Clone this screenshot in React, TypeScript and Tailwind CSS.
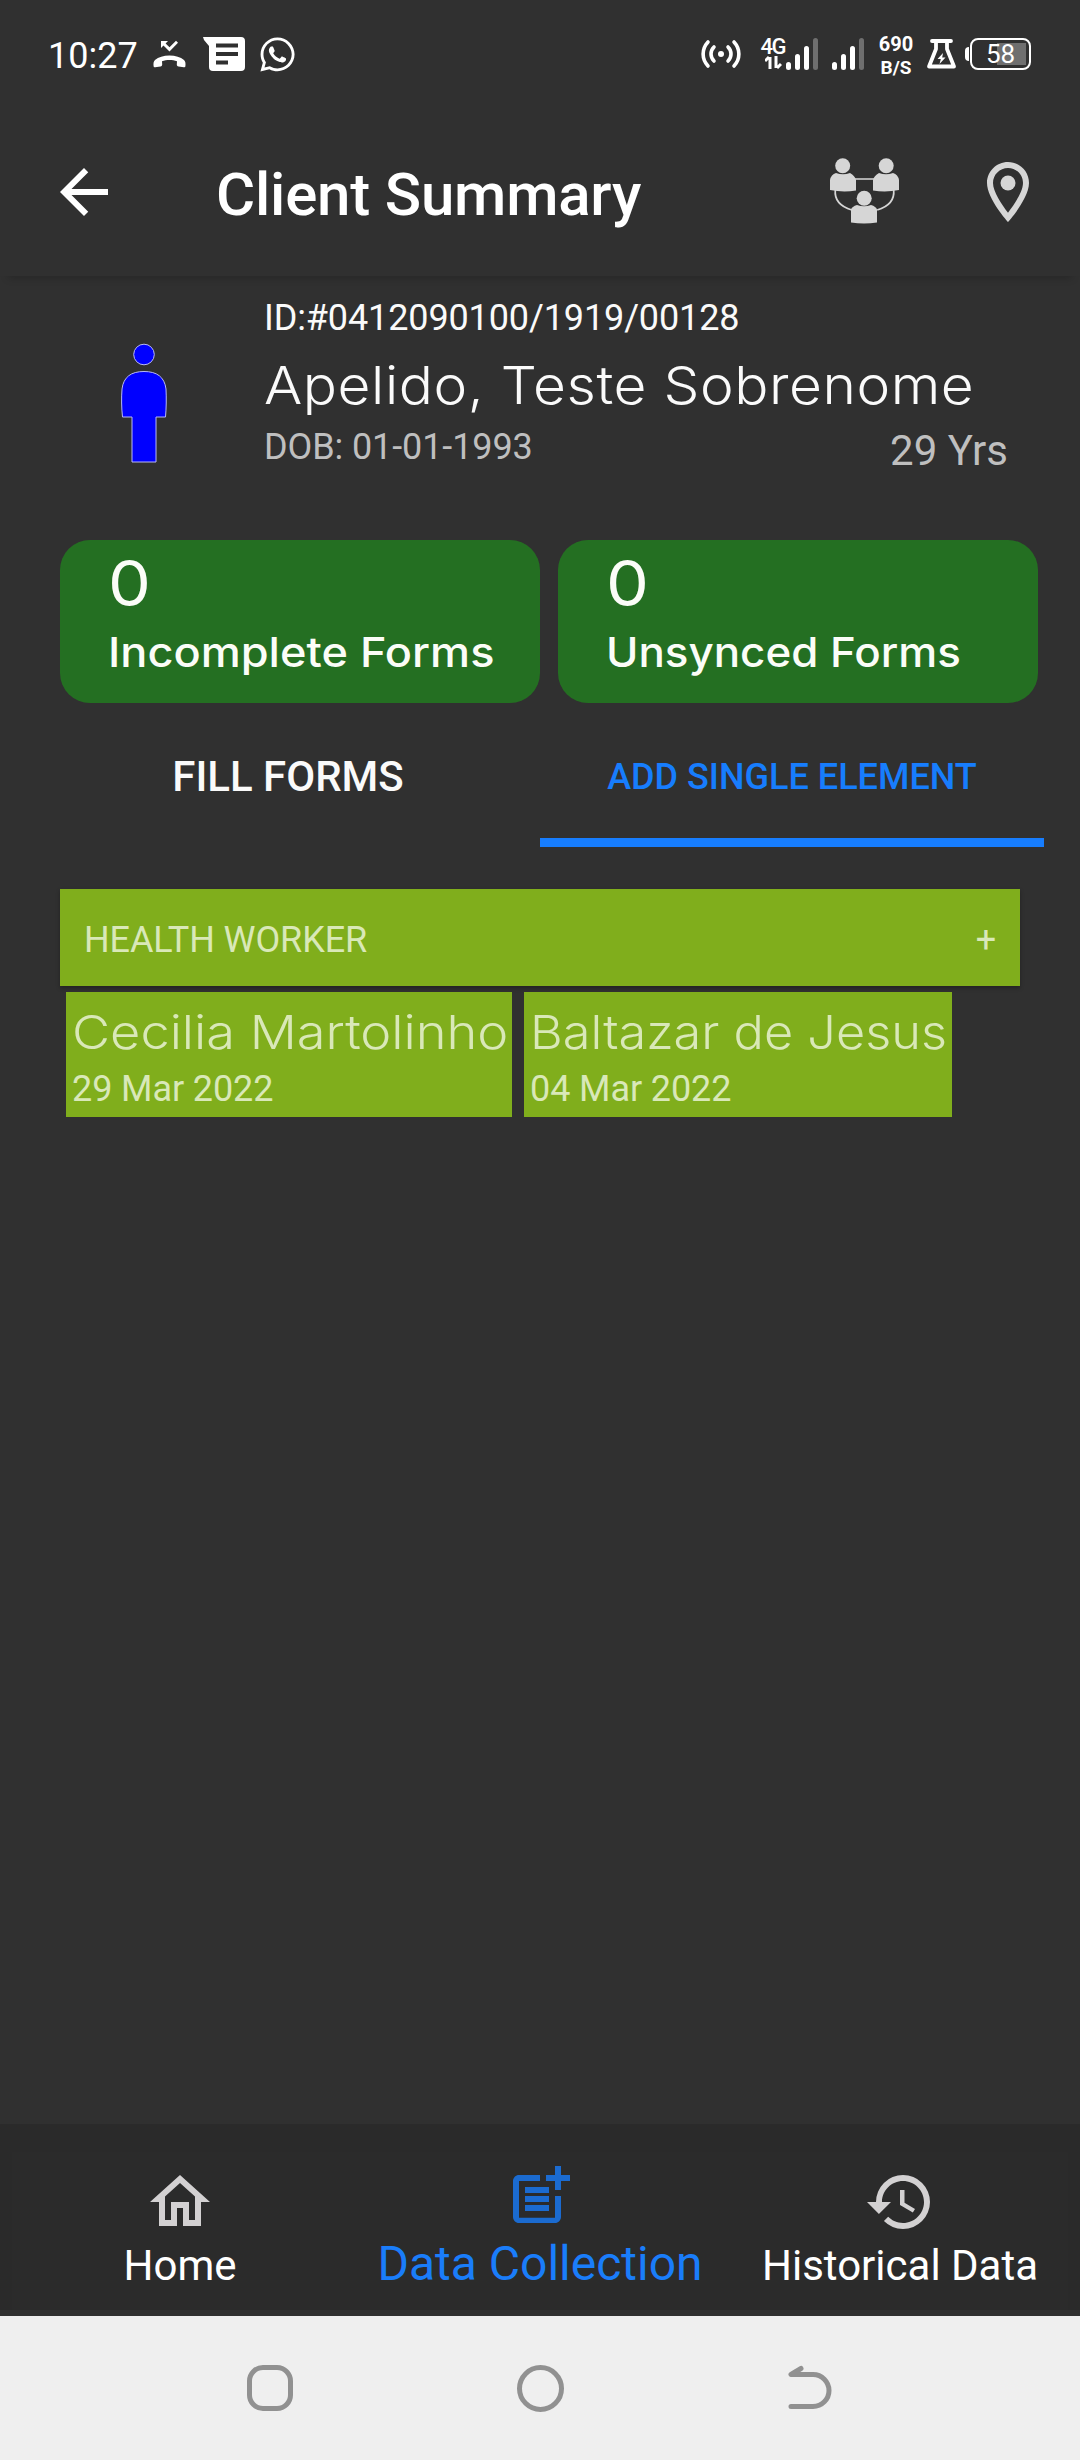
import { ReactNode } from "react";
import { MdArrowBack, MdHistory, MdOutlineHome, MdPostAdd } from "react-icons/md";
import { FaWhatsapp } from "react-icons/fa";

const healthWorkers = [
  { name: "Cecilia Martolinho", date: "29 Mar 2022", width: "w-[446px]", stretch: "scale-x-[1.113]" },
  { name: "Baltazar de Jesus", date: "04 Mar 2022", width: "w-[428px]", stretch: "scale-x-[1.073]" },
];

function SignalBars() {
  return (
    <div className="flex h-8 items-end gap-1">
      <div className="h-2 w-[5px] rounded-sm bg-white" />
      <div className="h-4 w-[5px] rounded-sm bg-white" />
      <div className="h-6 w-[5px] rounded-sm bg-white" />
      <div className="h-8 w-[5px] rounded-sm bg-[#6f6f6f]" />
    </div>
  );
}

function MissedCallIcon() {
  return (
    <svg width="33" height="28" viewBox="0 0 33 28" fill="white">
      <path d="M8 1h7l-2.4 2.4L16.5 7.3 23 .8l2 2-8.5 8.7-6-6L8 8z" />
      <path d="M16.5 15.5c6 0 11 1.500 14.500 4.500 1.500 1.400 1.700 3.500 1.400 6.200-.1.800-.8 1.200-1.600 1.100l-5.300-.8c-1.200-.2-1.700-1-1.700-2l.2-3.200c-4.500-1.700-10.500-1.700-15 0l.2 3.200c0 1-.5 1.800-1.700 2l-5.300.8c-.8.1-1.500-.3-1.600-1.100C.3 23.500.5 21.400 2 20c3.500-3 8.500-4.500 14.500-4.500z" />
    </svg>
  );
}

function MessageIcon() {
  return (
    <svg width="42" height="34" viewBox="0 0 42 34">
      <path
        d="M0 0h38a4 4 0 0 1 4 4v26a4 4 0 0 1-4 4H10a4 4 0 0 1-4-4V9L1 3z"
        fill="white"
      />
      <path d="M13 8.5h22M13 17h22M13 25.5h12" stroke="#303030" strokeWidth="4" />
    </svg>
  );
}

function HotspotIcon() {
  return (
    <svg
      width="42"
      height="30"
      viewBox="0 0 42 30"
      fill="none"
      stroke="white"
      strokeWidth="3.6"
      strokeLinecap="round"
    >
      <path d="M8 3C1.500 10 1.500 20 8 27M34 3c6.500 7 6.500 17 0 24M14 8c-4 4-4 10 0 14M28 8c4 4 4 10 0 14" />
      <circle cx="21" cy="15" r="3" fill="white" stroke="none" />
    </svg>
  );
}

function FlaskIcon() {
  return (
    <svg width="31" height="31" viewBox="0 0 31 31" fill="none">
      <path
        d="M6 2h19M10 3v7L3 27.500h25L21 10V3"
        stroke="white"
        strokeWidth="3.8"
        strokeLinecap="round"
        strokeLinejoin="round"
      />
      <path d="M17 14l-5.500 6h3.300L13.500 25l6-6.500h-3.300z" fill="white" />
    </svg>
  );
}

function GroupIcon() {
  return (
    <svg width="70" height="68" viewBox="830 158 70 68" fill="#d6d6d6">
      <circle cx="842.7" cy="165.7" r="7.5" />
      <circle cx="886.2" cy="165.7" r="7.5" />
      <circle cx="864.2" cy="198.3" r="7.5" />
      <path d="M830 190v-10q1-5.500 6-7 7 2.600 14 0 5 3 6 7v10.500q-13 2-26-.5z" />
      <path d="M899 190v-10q-1-5.500-6-7-7 2.600-14 0-5 3-6 7v10.500q13 2 26-.5z" />
      <path d="M851 222.500v-13q1-3 6-4.500 7 2.600 14 0 5 1.500 6 4.500v13q-13 2-26 0z" />
      <path
        d="M855 179h19M835.300 190c-1 10 5 16.500 16.500 20M893.700 190c1 10-5 16.500-16.500 20"
        fill="none"
        stroke="#d6d6d6"
        strokeWidth="1.7"
      />
    </svg>
  );
}

function PlaceIcon() {
  return (
    <svg width="72" height="72" viewBox="0 0 24 24" fill="#d6d6d6" className="ml-[72px]">
      <path d="M12 2C8.130 2 5 5.130 5 9c0 5.250 7 13 7 13s7-7.750 7-13c0-3.870-3.130-7-7-7zM7 9c0-2.760 2.240-5 5-5s5 2.240 5 5c0 2.880-2.880 7.190-5 9.880C9.920 16.210 7 11.850 7 9z" />
      <circle cx="12" cy="9" r="2.5" />
    </svg>
  );
}

function PersonIcon() {
  return (
    <svg
      width="46"
      height="122"
      viewBox="0 0 46 122"
      fill="#0000ff"
      stroke="#b9b9f5"
      strokeWidth="1"
    >
      <circle cx="23" cy="11.5" r="10.3" />
      <path d="M23 28.500C36 28.500 43.500 34 45 46c.5 9 .3 19-.5 28H35v45H11V74H1.500C.5 65 .3 55 1 46 2.500 34 10 28.500 23 28.500z" />
    </svg>
  );
}

function StatusBar() {
  return (
    <div className="flex h-[108px] items-center justify-between pl-12 pr-[49px] text-white">
      <div className="flex items-center">
        <span className="w-[105px] pt-1 text-[36px] leading-[42px]">10:27</span>
        <MissedCallIcon />
        <div className="ml-[17px]">
          <MessageIcon />
        </div>
        <FaWhatsapp size={39} className="ml-[13px]" />
      </div>
      <div className="flex items-center">
        <HotspotIcon />
        <div className="ml-[19px] flex flex-col">
          <span className="h-[17px] text-[22px] font-medium leading-[17px] tracking-[-1.5px]">
            4G
          </span>
          <svg width="17" height="15" viewBox="0 0 17 15" className="ml-1">
            <path d="M0 6l4-4M5 2v12M11 1v12M16 9l-4 4" stroke="white" strokeWidth="3" fill="none" />
          </svg>
        </div>
        <div className="ml-px flex gap-[14px]">
          <SignalBars />
          <SignalBars />
        </div>
        <div className="ml-[13px] w-[38px] pt-[3px] text-center text-[20px] font-bold leading-[23px]">
          <div>690</div>
          <div className="text-[19px]">B/S</div>
        </div>
        <div className="ml-[11px]">
          <FlaskIcon />
        </div>
        <div className="ml-2 h-3.5 w-1 rounded-l bg-white" />
        <div className="ml-px flex h-8 w-[61px] items-center justify-center rounded-lg border-2 border-white bg-[linear-gradient(#6f6f6f,#6f6f6f)] bg-[length:29px_22px] bg-[position:25px_3px] bg-no-repeat text-[26px] leading-none">
          58
        </div>
      </div>
    </div>
  );
}

function AppBar() {
  return (
    <header className="flex h-[168px] items-center pl-12 pr-9 shadow-[0_10px_8px_-8px_rgba(0,0,0,0.2)]">
      <MdArrowBack size={72} color="white" />
      <h1 className="ml-24 flex-1 pt-[5px] text-[60px] font-medium leading-[70px] tracking-[-0.2px] text-white">
        Client Summary
      </h1>
      <GroupIcon />
      <PlaceIcon />
    </header>
  );
}

function FormsCard({ label, stretch }: { label: string; stretch: string }) {
  return (
    <div className="h-[163px] w-[480px] shrink-0 rounded-[30px] bg-[#246f22] pl-12 pt-2 font-['Inter'] text-[#fbfdf8]">
      <div className="origin-left scale-x-[1.08] text-[63px] leading-[70px]">0</div>
      <div
        className={`origin-left whitespace-nowrap text-[41px] font-medium leading-[68px] ${stretch}`}
      >
        {label}
      </div>
    </div>
  );
}

function NavItem({ icon, label, active }: { icon: ReactNode; label: string; active?: boolean }) {
  return (
    <div
      className={
        active
          ? "flex w-[360px] flex-col items-center pt-2 text-[48px] leading-[56px] text-[#1a7dfa]"
          : "flex w-[360px] flex-col items-center pt-3.5 text-[42px] leading-[56px] text-white"
      }
    >
      {icon}
      <span className={active ? "mt-1" : ""}>{label}</span>
    </div>
  );
}

export default function App() {
  return (
    <div className="flex h-[2460px] w-[1080px] flex-col overflow-hidden bg-[#303030] font-['Roboto',sans-serif]">
      <StatusBar />
      <AppBar />

      {/* Client details */}
      <section className="flex h-[264px] pl-[121px] pr-[72px] pt-[21px]">
        <div className="w-[143px] pt-[46px]">
          <PersonIcon />
        </div>
        <div className="flex-1 whitespace-nowrap">
          <div className="text-[36px] leading-[42px] tracking-[-0.12px] text-[#fafafa]">
            ID:#0412090100/1919/00128
          </div>
          <div className="mt-[14px] origin-left scale-x-[1.093] font-['Inter'] text-[52px] font-light leading-[66px] tracking-[0.5px] text-[#fafafa]">
            Apelido, Teste Sobrenome
          </div>
          <div className="mt-[7px] flex justify-between text-[#bfbfbf]">
            <span className="text-[36px] leading-[42px] tracking-[-0.1px]">DOB: 01-01-1993</span>
            <span className="pt-[3px] text-[42px] leading-[43px]">29 Yrs</span>
          </div>
        </div>
      </section>

      <section className="flex gap-[18px] pl-[60px]">
        <FormsCard label="Incomplete Forms" stretch="scale-x-[1.1]" />
        <FormsCard label="Unsynced Forms" stretch="scale-x-[1.07]" />
      </section>

      {/* Tabs */}
      <div className="flex h-[144px] px-9 font-medium">
        <div className="w-[504px] pt-[49px] text-center text-[42px] leading-[49px] text-[#fafafa]">
          FILL FORMS
        </div>
        <div className="w-[504px] border-b-[9px] border-[#177dfd] pt-[50px] text-center text-[36px] leading-[49px] text-[#177dfd]">
          ADD SINGLE ELEMENT
        </div>
      </div>

      {/* Single elements */}
      <section className="mt-[42px] flex-1 text-[36px] tracking-[-0.1px] text-[#d9e8b8]">
        <div className="ml-[60px] flex h-[97px] w-[960px] items-center justify-between bg-[#80ae1c] px-6 pt-1 shadow-[0_2px_4px_rgba(0,0,0,0.3)]">
          <span>HEALTH WORKER</span>
          <span>+</span>
        </div>
        <div className="ml-[66px] mt-1.5 flex gap-3">
          {healthWorkers.map((worker) => (
            <div
              key={worker.name}
              className={`h-[125px] whitespace-nowrap bg-[#80ae1c] pl-1.5 pt-2 ${worker.width}`}
            >
              <div
                className={`origin-left font-['Inter'] text-[47px] font-light leading-[64px] tracking-normal ${worker.stretch}`}
              >
                {worker.name}
              </div>
              <div className="leading-[51px]">{worker.date}</div>
            </div>
          ))}
        </div>
      </section>

      {/* Bottom navigation */}
      <nav className="mb-1.5 h-[186px] bg-[#2a2a2a] px-3 pt-7">
        <div className="flex h-[158px] justify-center bg-[#2b2b2b]">
          <div className="-mx-3 flex shrink-0">
            <NavItem icon={<MdOutlineHome size={72} color="#d3d1d2" />} label="Home" />
            <NavItem icon={<MdPostAdd size={72} color="#1b6bd0" />} label="Data Collection" active />
            <NavItem icon={<MdHistory size={72} color="#d3d1d2" />} label="Historical Data" />
          </div>
        </div>
      </nav>

      {/* System buttons */}
      <div className="flex h-36 items-center justify-center gap-56 bg-[#efefef]">
        <div className="h-[46px] w-[46px] rounded-2xl border-5 border-[#919191]" />
        <div className="h-[47px] w-[47px] rounded-full border-5 border-[#919191]" />
        <svg
          width="46"
          height="46"
          viewBox="0 0 46 46"
          fill="none"
          stroke="#919191"
          strokeWidth="5"
          strokeLinecap="round"
          strokeLinejoin="round"
        >
          <path d="M13 3.500L3 9.500H25a16 16 0 0 1 0 32H3" />
        </svg>
      </div>
    </div>
  );
}
